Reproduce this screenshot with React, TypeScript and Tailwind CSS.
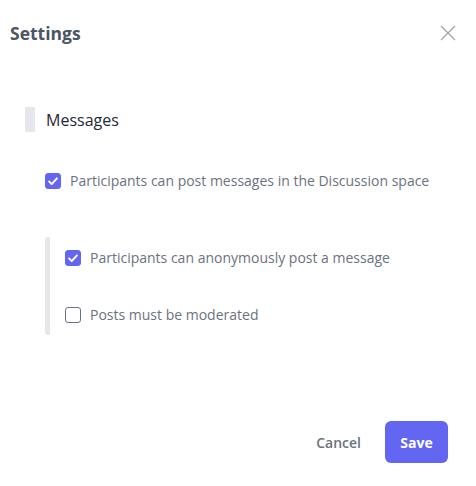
import { useState } from 'react';

function Check({ checked, onChange, label }: { checked: boolean; onChange: () => void; label: string }) {
  return (
    <label className="flex cursor-pointer items-center gap-[9px]">
      <span
        onClick={onChange}
        className={`flex h-4 w-4 items-center justify-center rounded-[3px] border ${
          checked ? 'border-[#6366f1] bg-[#6366f1]' : 'border-[#6b7280] bg-white'
        }`}
      >
        {checked ? (
          <svg viewBox="0 0 16 16" className="h-[14px] w-[14px]" fill="none" stroke="white" strokeWidth="2.2" strokeLinecap="round" strokeLinejoin="round">
            <path d="M3.5 8.5l3 3 6-6.5" />
          </svg>
        ) : null}
      </span>
      <span className="text-[14px] text-[#6b7280]">{label}</span>
    </label>
  );
}

export default function App() {
  const [post, setPost] = useState(true);
  const [anon, setAnon] = useState(true);
  const [moderated, setModerated] = useState(false);

  return (
    <main className="relative h-[486px] w-[476px] bg-white font-['Open_Sans',sans-serif]">
      <div className="flex items-center justify-between pl-[10px] pr-[20px] pt-[20px]">
        <h1 className="text-[17.5px] font-bold text-[#4b5563]">Settings</h1>
        <button type="button" className="text-[#9ca3af]">
          <svg viewBox="0 0 16 16" className="h-4 w-4" fill="none" stroke="currentColor" strokeWidth="1.2">
            <path d="M1 1l14 14M15 1L1 15" />
          </svg>
        </button>
      </div>

      <section className="mt-[61px] pl-[25px]">
        <div className="flex items-center gap-[11px]">
          <span className="h-[25px] w-[10px] bg-[#e5e7eb]" />
          <h2 className="text-[16px] font-medium text-[#1f2937]">Messages</h2>
        </div>

        <div className="mt-[38px] pl-[20px]">
          <Check checked={post} onChange={() => setPost(!post)} label="Participants can post messages in the Discussion space" />
        </div>

        <div className="mt-[46px] ml-[20px] flex flex-col gap-[36px] rounded-[3px] border-l-[5px] border-[#e5e7eb] pb-[10px] pl-[15px] pt-[10px]">
          <Check checked={anon} onChange={() => setAnon(!anon)} label="Participants can anonymously post a message" />
          <Check checked={moderated} onChange={() => setModerated(!moderated)} label="Posts must be moderated" />
        </div>
      </section>

      <div className="absolute bottom-[23px] right-[28px] flex items-center gap-[24px]">
        <button type="button" className="text-[14px] font-semibold text-[#6b7280]">Cancel</button>
        <button type="button" className="h-[42px] w-[63px] rounded-md bg-[#6366f1] text-[14px] font-bold text-white">Save</button>
      </div>
    </main>
  );
}
